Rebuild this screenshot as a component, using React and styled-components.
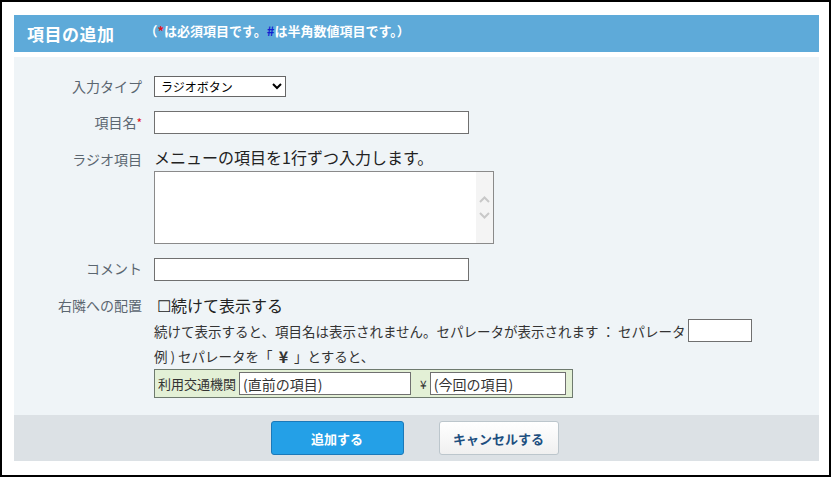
import React from 'react';
import styled, { createGlobalStyle } from 'styled-components';

const GlobalStyle = createGlobalStyle`
  html, body {
    margin: 0;
    padding: 0;
    background: #fff;
  }
  body {
    font-family: "Noto Sans CJK JP", "Noto Sans", sans-serif;
  }
`;

const Frame = styled.div`
  width: 831px;
  height: 477px;
  box-sizing: border-box;
  border: 2px solid #000;
  padding: 13px 10px 0 12px;
  background: #fff;
`;

const Header = styled.div`
  height: 37px;
  background: #5eaad9;
  display: flex;
  align-items: center;
  padding-left: 13px;
  color: #fff;
`;

const Title = styled.h1`
  margin: 0;
  font-size: 17px;
  font-weight: bold;
  letter-spacing: 0.5px;
`;

const Note = styled.span`
  margin-left: 30px;
  margin-top: -6px;
  font-size: 13px;
  font-weight: bold;
`;

const Mark = styled.span`
  color: ${(p) => p.color};
`;

const Body = styled.div`
  margin-top: 5px;
  height: 358px;
  box-sizing: border-box;
  background: #eff4f7;
  padding-top: 19px;
`;

const Row = styled.div`
  display: grid;
  grid-template-columns: 128px 1fr;
  column-gap: 12px;
  margin-top: ${(p) => p.$gap || 0}px;
`;

const Label = styled.div`
  text-align: right;
  font-size: 14px;
  color: #5b6670;
  line-height: ${(p) => p.$lh || 20}px;
  white-space: nowrap;
`;

const Req = styled.span`
  color: #e0141e;
  font-size: 12px;
`;

const Field = styled.div`
  display: flex;
  flex-direction: column;
  align-items: flex-start;
`;

const Select = styled.select`
  width: 132px;
  height: 21px;
  box-sizing: border-box;
  border: 1px solid #666;
  border-radius: 0;
  background: #fff;
  font-family: inherit;
  font-size: 12px;
  color: #000;
  padding: 0 2px;
`;

const TextInput = styled.input`
  width: ${(p) => p.$w}px;
  height: ${(p) => p.$h || 23}px;
  box-sizing: border-box;
  border: 1px solid #707070;
  background: #fff;
  font-family: inherit;
  font-size: 14px;
  color: #333;
  padding: 0 3px;
  margin: 0;
  outline: none;
  &::placeholder {
    color: #333;
  }
`;

const Hint = styled.div`
  font-size: 16px;
  color: #222;
  line-height: 20px;
  margin-top: -2px;
`;

const AreaBox = styled.div`
  margin-top: 4px;
  width: 340px;
  height: 73px;
  box-sizing: border-box;
  border: 1px solid #8a8a8a;
  background: #fff;
  display: flex;
`;

const AreaText = styled.div`
  flex: 1;
`;

const ScrollTrack = styled.div`
  width: 17px;
  background: #f4f4f4;
  display: flex;
  flex-direction: column;
  align-items: center;
  justify-content: center;
  gap: 9px;
`;

const CheckLine = styled.label`
  font-size: 16px;
  color: #222;
  line-height: 20px;
  margin-left: 3px;
  display: flex;
  align-items: center;
`;

const SubLine = styled.div`
  display: flex;
  align-items: center;
  font-size: 13.5px;
  line-height: 20px;
  color: #333;
  margin-top: ${(p) => p.$gap || 0}px;
  white-space: nowrap;
`;

const Yen = styled.span`
  font-weight: bold;
  font-size: 16px;
  margin: 0 6px;
`;

const Example = styled.div`
  margin-top: 3px;
  width: 419px;
  height: 29px;
  box-sizing: border-box;
  border: 1px solid #6e7a6e;
  background: #e3f0d6;
  display: flex;
  align-items: center;
  padding-left: 3px;
  font-size: 13px;
  color: #333;
`;

const Sep = styled.span`
  margin: 0 3px 0 9px;
  font-size: 12px;
`;

const Footer = styled.div`
  height: 46px;
  background: #dce1e5;
  display: flex;
  align-items: center;
  justify-content: center;
  gap: 35px;
  padding-right: 4px;
`;

const Button = styled.button`
  width: ${(p) => p.$w}px;
  height: 34px;
  border-radius: 3px;
  font-family: inherit;
  font-size: 13px;
  font-weight: bold;
  cursor: pointer;
  border: 1px solid ${(p) => (p.$primary ? '#1b79b9' : '#bcc6cc')};
  background: ${(p) =>
    p.$primary ? '#24a0e7' : 'linear-gradient(#ffffff, #f0f0f0)'};
  color: ${(p) => (p.$primary ? '#fff' : '#1d4f80')};
`;

const Chevron = ({ up }) => (
  <svg width="11" height="7" viewBox="0 0 11 7">
    <path
      d={up ? 'M1 6 L5.5 1.5 L10 6' : 'M1 1 L5.5 5.5 L10 1'}
      fill="none"
      stroke="#c8c8c8"
      strokeWidth="2"
    />
  </svg>
);

const App = () => {
  return (
    <>
      <GlobalStyle />
      <Frame>
        <Header>
          <Title>項目の追加</Title>
          <Note>
            （<Mark color="#e0141e">*</Mark>は必須項目です。
            <Mark color="#1020d0">#</Mark>は半角数値項目です。）
          </Note>
        </Header>

        <Body>
          <Row>
            <Label>入力タイプ</Label>
            <Field>
              <Select defaultValue="radio">
                <option value="radio">ラジオボタン</option>
              </Select>
            </Field>
          </Row>

          <Row $gap={14}>
            <Label $lh={23}>
              項目名<Req>*</Req>
            </Label>
            <Field>
              <TextInput $w={315} />
            </Field>
          </Row>

          <Row $gap={15}>
            <Label>ラジオ項目</Label>
            <Field>
              <Hint>メニューの項目を1行ずつ入力します。</Hint>
              <AreaBox>
                <AreaText />
                <ScrollTrack>
                  <Chevron up />
                  <Chevron />
                </ScrollTrack>
              </AreaBox>
            </Field>
          </Row>

          <Row $gap={14}>
            <Label $lh={21}>コメント</Label>
            <Field>
              <TextInput $w={315} />
            </Field>
          </Row>

          <Row $gap={14}>
            <Label $lh={20}>右隣への配置</Label>
            <Field>
              <CheckLine>☐続けて表示する</CheckLine>
              <SubLine $gap={4}>
                続けて表示すると、項目名は表示されません。セパレータが表示されます ： セパレータ
                <TextInput $w={64} style={{ marginLeft: 2 }} />
              </SubLine>
              <SubLine $gap={4}>
                例 ) セパレータを「<Yen>¥</Yen>」とすると、
              </SubLine>
              <Example>
                利用交通機関
                <TextInput $w={172} $h={23} placeholder="(直前の項目)" style={{ marginLeft: 3 }} />
                <Sep>¥</Sep>
                <TextInput $w={136} $h={23} placeholder="(今回の項目)" />
              </Example>
            </Field>
          </Row>
        </Body>

        <Footer>
          <Button $primary $w={133}>追加する</Button>
          <Button $w={120}>キャンセルする</Button>
        </Footer>
      </Frame>
    </>
  );
};

export default App;
